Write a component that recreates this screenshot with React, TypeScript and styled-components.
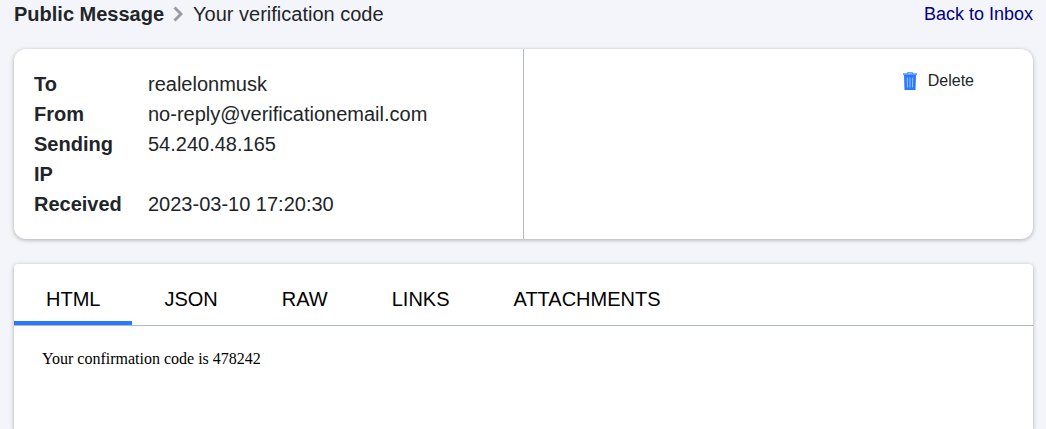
import React, { useState } from 'react';
import styled, { createGlobalStyle } from 'styled-components';

const GlobalStyle = createGlobalStyle`
  *, *::before, *::after { box-sizing: border-box; }
  html { background: #f4f5fa; }
  body {
    margin: 0;
    color: #212529;
    background: #f4f5fa;
    font: 20px/30px "Liberation Sans", Arial, sans-serif;
  }
`;

const Page = styled.main`
  display: flex;
  flex-direction: column;
  min-height: 100vh;
  padding: 0 13px 0 14px;
`;

const Header = styled.header`
  display: flex;
  align-items: center;
  justify-content: space-between;
  height: 27px;
  margin-bottom: 22px;
`;

const Breadcrumb = styled.h1`
  display: flex;
  align-items: center;
  margin: 0;
  font-size: 20px;
  font-weight: 400;
`;

const Chevron = styled.svg`
  width: 10px;
  height: 18px;
  margin: 0 10px 0 9px;
`;

const BackLink = styled.a`
  color: #000080;
  font-size: 18px;
  text-decoration: none;
`;

const Card = styled.section`
  display: grid;
  grid-template-columns: 1fr 1fr;
  margin-bottom: 25px;
  border-radius: 12px;
  background: #fff;
  box-shadow: 0 1px 4px rgba(0, 0, 0, 0.3);
`;

const Details = styled.div`
  padding: 20px;
  border-right: 1px solid #b0b8c0;
`;

const DetailTable = styled.table`
  border-collapse: collapse;
  width: 100%;
  table-layout: fixed;
`;

const Label = styled.th`
  width: 114px;
  padding: 0 24px 0 0;
  text-align: left;
  vertical-align: top;
  font-weight: 700;
`;

const Value = styled.td`
  padding: 0;
  vertical-align: top;
`;

const Actions = styled.div`
  display: flex;
  align-items: flex-start;
  justify-content: flex-end;
  padding: 20px 59px;
`;

const DeleteButton = styled.button`
  display: flex;
  align-items: center;
  gap: 11px;
  padding: 0;
  border: 0;
  background: none;
  color: inherit;
  font: 16px/24px "Liberation Sans", Arial, sans-serif;
  cursor: pointer;
`;

const TrashIcon = styled.svg`
  width: 14px;
  height: 18px;
`;

const Message = styled.section`
  flex: 1;
  border-radius: 4px 4px 0 0;
  background: #fff;
  box-shadow: 0 1px 4px rgba(0, 0, 0, 0.3);
`;

const TabBar = styled.div`
  display: flex;
  height: 62px;
  border-bottom: 1px solid #b0b8c0;
`;

const Tab = styled.button<{ $active: boolean }>`
  padding: 16px 32px 8px;
  border: 0;
  box-shadow: inset 0 -4px ${({ $active }) => ($active ? '#2979ff' : 'transparent')};
  background: none;
  color: #000;
  font: 20px/30px "Liberation Sans", Arial, sans-serif;
  cursor: pointer;
`;

const Body = styled.div`
  padding: 24px 28px;
  color: #000;
  font: 16px/18px "Liberation Serif", "Times New Roman", serif;
`;

const details = [
  ['To', 'realelonmusk'],
  ['From', 'no-reply@verificationemail.com'],
  ['Sending IP', '54.240.48.165'],
  ['Received', '2023-03-10 17:20:30'],
];

const tabs = ['HTML', 'JSON', 'RAW', 'LINKS', 'ATTACHMENTS'];

export default function App() {
  const [active, setActive] = useState('HTML');

  return (
    <>
      <GlobalStyle />
      <Page>
        <Header>
          <Breadcrumb>
            <b>Public Message</b>
            <Chevron viewBox="0 0 10 18" aria-hidden="true">
              <path d="M1.5 2.5l6.5 6.5l-6.5 6.5" fill="none" stroke="#9a9aa6" strokeWidth="2.9" />
            </Chevron>
            <span>Your verification code</span>
          </Breadcrumb>
          <BackLink href="#inbox">Back to Inbox</BackLink>
        </Header>
        <Card>
          <Details>
            <DetailTable>
              <tbody>
                {details.map(([label, value]) => (
                  <tr key={label}>
                    <Label scope="row">{label}</Label>
                    <Value>{value}</Value>
                  </tr>
                ))}
              </tbody>
            </DetailTable>
          </Details>
          <Actions>
            <DeleteButton type="button">
              <TrashIcon viewBox="0 0 14 18" aria-hidden="true">
                <path d="M4.5 2V.5h5V2" fill="none" stroke="#2979ff" strokeOpacity="0.7" />
                <path d="M0 1.3h14v1.7H0z" fill="#2979ff" fillOpacity="0.75" />
                <path d="M1 3h12l-.5 15H1.5z" fill="#2979ff" />
                <path d="M4.3 5.5l.2 10M7 5.5v10M9.7 5.5l-.2 10" stroke="#a9caff" strokeWidth="0.9" />
              </TrashIcon>
              Delete
            </DeleteButton>
          </Actions>
        </Card>
        <Message>
          <TabBar role="tablist">
            {tabs.map((tab) => (
              <Tab
                key={tab}
                type="button"
                role="tab"
                aria-selected={tab === active}
                $active={tab === active}
                onClick={() => setActive(tab)}
              >
                {tab}
              </Tab>
            ))}
          </TabBar>
          <Body role="tabpanel">Your confirmation code is 478242</Body>
        </Message>
      </Page>
    </>
  );
}
